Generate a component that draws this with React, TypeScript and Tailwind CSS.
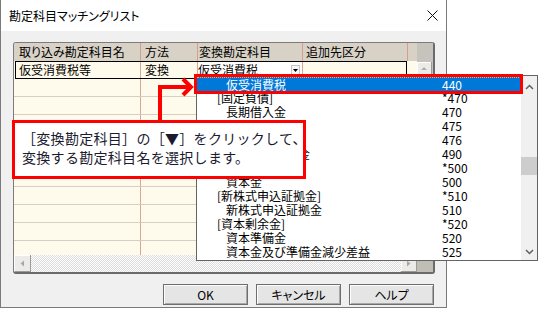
import React from "react";

type Item = { t: string; n: string; child?: boolean; sel?: boolean };

const items: Item[] = [
  { t: "仮受消費税", n: "440", child: true, sel: true },
  { t: "[固定負債]", n: "*470" },
  { t: "長期借入金", n: "470", child: true },
  { t: "", n: "475", child: true },
  { t: "", n: "476", child: true },
  { t: "退職給付引当金", n: "490", child: true },
  { t: "", n: "*500" },
  { t: "資本金", n: "500", child: true },
  { t: "[新株式申込証拠金]", n: "*510" },
  { t: "新株式申込証拠金", n: "510", child: true },
  { t: "[資本剰余金]", n: "*520" },
  { t: "資本準備金", n: "520", child: true },
  { t: "資本金及び準備金減少差益", n: "525", child: true },
];

function EmptyRow({ last }: { last?: boolean }) {
  return (
    <div
      className={
        last
          ? "flex flex-1 bg-[#fffbec]"
          : "flex h-[18px] shrink-0 border-b border-[#d6d0c2] bg-[#fffbec]"
      }
    >
      <div className="w-[127px] border-r border-[#d8a697]" />
      <div className="w-[57px] border-r border-[#d8a697]" />
      <div className="w-[105px] border-r border-[#d8a697]" />
      <div className="w-[105px] border-r border-[#d8a697]" />
      <div className="flex-1" />
    </div>
  );
}

function ScrollBtn({ dir, w }: { dir: "left" | "right" | "up"; w: string }) {
  return (
    <div
      className={`${w} flex items-center justify-center bg-[#ecebe8] border-r border-b border-[#9a9a9a] shadow-[inset_1px_1px_0_#ffffff]`}
    >
      <svg width="6" height="7" viewBox="0 0 6 7">
        {dir === "left" && <path d="M5 0.5L1.5 3.5L5 6.5Z" fill="#a8a8a8" />}
        {dir === "right" && <path d="M1 0.5L4.5 3.5L1 6.5Z" fill="#a8a8a8" />}
        {dir === "up" && <path d="M0 5L3 2L6 5Z" fill="#b0b0b0" />}
      </svg>
    </div>
  );
}

function DlgButton({ label }: { label: string }) {
  return (
    <div className="w-[85px] h-[21px] flex items-center justify-center border border-[#6e6e6e] bg-[#e5e5e5] shadow-[inset_1px_1px_0_#fdfdfd,inset_-1px_-1px_0_#a8a8a8] leading-none">
      {label}
    </div>
  );
}

function Chevron({ up }: { up?: boolean }) {
  return (
    <svg width="9" height="6" viewBox="0 0 9 6">
      <path
        d={up ? "M1 5L4.5 1.5L8 5" : "M1 1L4.5 4.5L8 1"}
        stroke="#606060"
        strokeWidth="1.5"
        fill="none"
      />
    </svg>
  );
}

export default function App() {
  return (
    <div className="relative w-[538px] h-[317px] overflow-hidden bg-white font-['Noto_Sans_CJK_JP',sans-serif] text-[12px] text-black [font-feature-settings:'palt']">
      {/* Dialog window */}
      <div className="w-[447px] h-[308px] flex flex-col border-x border-b border-[#7a7a7a] bg-[#f0f0f0]">
        {/* Title bar */}
        <div className="h-[31px] shrink-0 bg-white flex items-center justify-between pl-[8px] pr-[8px]">
          <span className="leading-none">勘定科目マッチングリスト</span>
          <svg width="11" height="11" viewBox="0 0 11 11">
            <path d="M0.5 0.5L10.5 10.5M10.5 0.5L0.5 10.5" stroke="#111" strokeWidth="1" />
          </svg>
        </div>

        {/* Body */}
        <div className="flex-1 flex flex-col pl-[12px] pt-[11px]">
          {/* Grid */}
          <div className="w-[422px] h-[232px] shrink-0 flex flex-col overflow-hidden rounded-[3px] border border-[#7c7c7c] border-r-2 border-b-2 border-r-[#6a6a6a] border-b-[#6a6a6a] bg-[#fffbec]">
            <div className="flex h-[212px]">
              {/* Main content */}
              <div className="w-[403px] flex flex-col">
                {/* Header */}
                <div className="flex h-[18px] shrink-0 bg-[#d8d2c6] leading-none">
                  <div className="w-[127px] border-r border-[#d29f90] pl-[5px] flex items-center">取り込み勘定科目名</div>
                  <div className="w-[57px] border-r border-[#d29f90] pl-[4px] flex items-center">方法</div>
                  <div className="w-[105px] border-r border-[#d29f90] pl-[1px] flex items-center">変換勘定科目</div>
                  <div className="w-[105px] border-r border-[#d29f90] pl-[3px] flex items-center">追加先区分</div>
                  <div className="flex-1" />
                </div>
                {/* Selected row */}
                <div className="flex h-[18px] shrink-0 bg-[#fffbec] leading-none">
                  <div className="ml-[1px] w-[392px] flex border border-black">
                    <div className="w-[125px] border-r border-[#d8a697] pl-[3px] flex items-center">仮受消費税等</div>
                    <div className="w-[57px] border-r border-[#d8a697] pl-[4px] flex items-center">変換</div>
                    <div className="w-[105px] border-r border-[#d8a697] bg-white flex items-center justify-between pr-[2px]">
                      <span>仮受消費税</span>
                      <span className="w-[9px] h-[10px] border border-[#c4c4c4] bg-[#f7f7f7] flex items-center justify-center">
                        <svg width="5" height="3" viewBox="0 0 5 3">
                          <path d="M0 0H5L2.5 3Z" fill="#000" />
                        </svg>
                      </span>
                    </div>
                    <div className="flex-1" />
                  </div>
                  <div className="flex-1" />
                </div>
                {Array.from({ length: 9 }).map((_, i) => (
                  <EmptyRow key={i} />
                ))}
                <EmptyRow last />
              </div>
              {/* Vertical scrollbar */}
              <div className="w-[16px] flex flex-col bg-[#c6c3bc]">
                <div className="mt-[19px] h-[14px] flex">
                  <ScrollBtn dir="up" w="w-[15px]" />
                </div>
              </div>
            </div>
            {/* Horizontal scrollbar */}
            <div className="flex h-[17px] shrink-0">
              <ScrollBtn dir="left" w="w-[17px]" />
              <div className="flex-1 bg-[repeating-conic-gradient(#dcdcdc_0%_25%,#ffffff_0%_50%)] bg-[length:2px_2px]" />
              <ScrollBtn dir="right" w="w-[16px]" />
              <div className="w-[16px] bg-[#c0bdb5]" />
            </div>
          </div>

          {/* Buttons */}
          <div className="flex gap-[8px] mt-[10px] ml-[150px]">
            <DlgButton label="OK" />
            <DlgButton label="キャンセル" />
            <DlgButton label="ヘルプ" />
          </div>
        </div>
      </div>

      {/* Dropdown list */}
      <div className="absolute left-[196px] top-[75px] w-[342px] h-[186px] flex border border-[#646464] bg-white [font-feature-settings:normal]">
        <div className="w-[324px] pt-[1px] flex flex-col">
          {items.map((it) => (
            <div
              key={it.n}
              className={
                it.sel
                  ? "flex h-[14px] items-center leading-[14px] bg-[#0078d7] text-white border-t border-dotted border-[#d9b36a]"
                  : "flex h-[14px] items-center leading-[14px]"
              }
            >
              <span className={it.child ? "w-[245px] pl-[29px] whitespace-nowrap" : "w-[245px] pl-[20px] whitespace-nowrap"}>
                {it.t}
              </span>
              <span>{it.n}</span>
            </div>
          ))}
        </div>
        <div className="flex-1 flex flex-col bg-[#f0f0f0]">
          <div className="h-[22px] flex items-center justify-center">
            <Chevron up />
          </div>
          <div className="h-[59px]" />
          <div className="h-[18px] bg-[#cdcdcd]" />
          <div className="flex-1" />
          <div className="h-[16px] flex items-center justify-center">
            <Chevron />
          </div>
        </div>
      </div>

      {/* Red highlight frame */}
      <div className="absolute left-[194px] top-[74px] w-[329px] h-[20px] border-[3px] border-[#ff0000]" />

      {/* Callout */}
      <div className="absolute left-[12px] top-[120px] w-[294px] h-[59px] border-[3px] border-[#ff0000] bg-white pl-[7px] pt-[6px] text-[14px] leading-[19px] tracking-[0.3px] text-[#1b1b30] [font-feature-settings:normal]">
        <div className="whitespace-nowrap">［変換勘定科目］の［▼］をクリックして、</div>
        <div className="whitespace-nowrap">変換する勘定科目名を選択します。</div>
      </div>

      {/* Arrow */}
      <svg className="absolute left-[154px] top-[74px]" width="42" height="50" viewBox="0 0 42 50">
        <path d="M6 48V13H36" stroke="#ff0000" strokeWidth="4" fill="none" strokeLinejoin="miter" />
        <path d="M29 5L37 13L29 21" stroke="#ff0000" strokeWidth="4" fill="none" strokeLinejoin="miter" />
      </svg>
    </div>
  );
}
